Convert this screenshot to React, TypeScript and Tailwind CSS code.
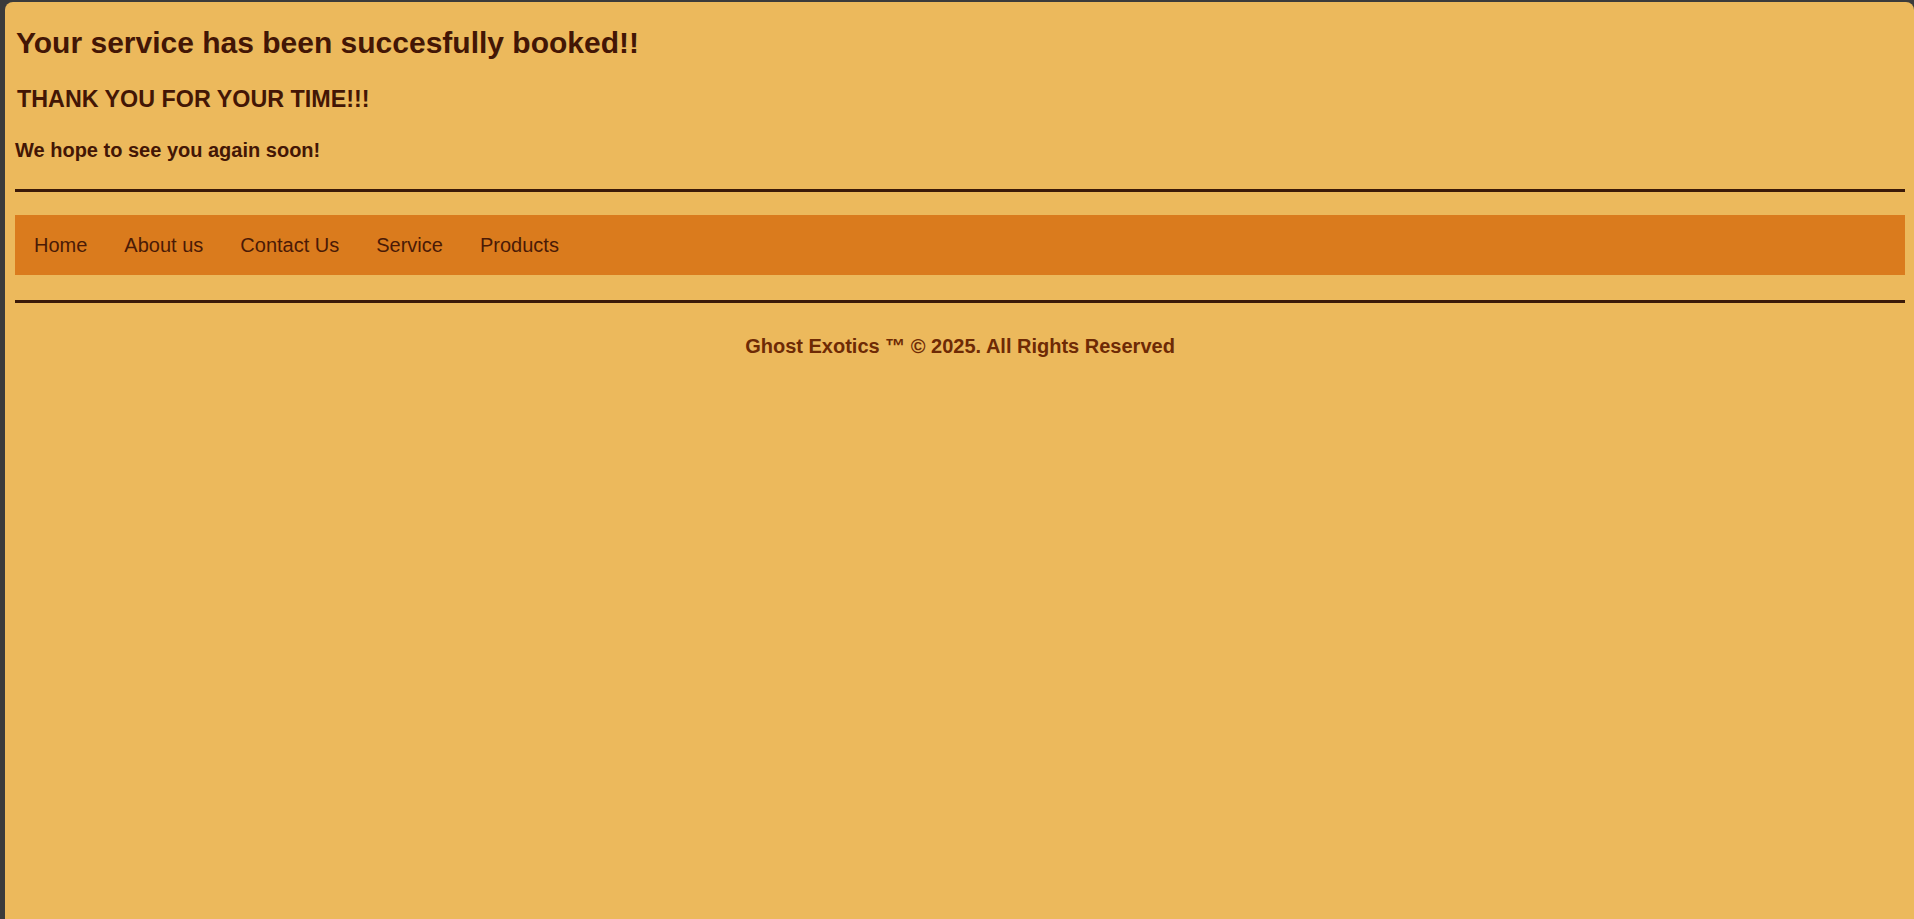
import React from "react";

const font = { fontFamily: '"Liberation Sans", Arial, sans-serif' };

export default function App() {
  const links = ["Home", "About us", "Contact Us", "Service", "Products"];
  return (
    <div className="min-h-screen w-full bg-[#3b3b3b] pl-[5px] pt-[2px]" style={font}>
      <div className="h-[917px] rounded-t-lg bg-[#ecb95c] pl-[10px] pr-[9px] pt-[23px]">
        <h1 className="pl-[1px] text-[30px] font-bold leading-[36px] text-[#431605]">
          Your service has been succesfully booked!!
        </h1>
        <h2 className="mt-[24px] pl-[2px] text-[23.3px] font-bold leading-[28px] text-[#431605]">
          THANK YOU FOR YOUR TIME!!!
        </h2>
        <h3 className="mt-[25px] text-[20px] font-bold leading-[24px] text-[#431605]">
          We hope to see you again soon!
        </h3>
        <div className="mt-[27px] h-[3px] bg-[#3b1a08]" />
        <nav className="mt-[23px] flex h-[60px] items-center gap-[37px] bg-[#da7b1d] px-[19px]">
          {links.map((l) => (
            <a key={l} className="text-[20px] leading-[24px] text-[#4a1a06]">
              {l}
            </a>
          ))}
        </nav>
        <div className="mt-[25px] h-[3px] bg-[#3b1a08]" />
        <p className="mt-[31px] text-center text-[20px] font-bold leading-[24px] text-[#6e2a05]">
          Ghost Exotics ™ © 2025. All Rights Reserved
        </p>
      </div>
    </div>
  );
}
